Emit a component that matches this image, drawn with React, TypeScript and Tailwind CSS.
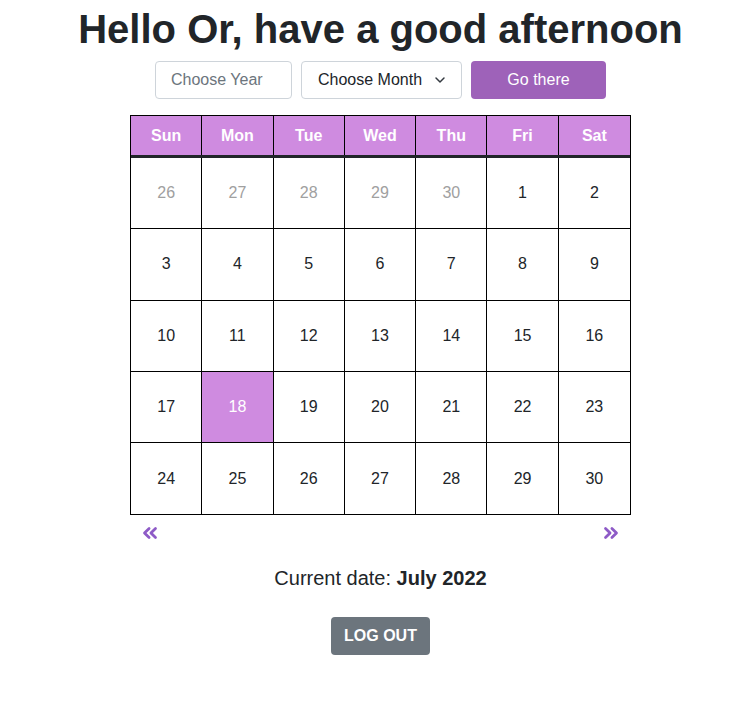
import React from "react";
import { ChevronsLeft, ChevronsRight, ChevronDown } from "lucide-react";

const days = ["Sun", "Mon", "Tue", "Wed", "Thu", "Fri", "Sat"];
const weeks: { d: number; muted?: boolean }[][] = [
  [{ d: 26, muted: true }, { d: 27, muted: true }, { d: 28, muted: true }, { d: 29, muted: true }, { d: 30, muted: true }, { d: 1 }, { d: 2 }],
  [3, 4, 5, 6, 7, 8, 9].map((d) => ({ d })),
  [10, 11, 12, 13, 14, 15, 16].map((d) => ({ d })),
  [17, 18, 19, 20, 21, 22, 23].map((d) => ({ d })),
  [24, 25, 26, 27, 28, 29, 30].map((d) => ({ d })),
];

export default function App() {
  return (
    <div className="min-h-[717px] bg-white text-[#212529] flex flex-col items-center pl-[12px]" style={{ fontFamily: '"Liberation Sans", Arial, sans-serif' }}>
      <h1 className="text-[40px] font-bold leading-[48px] mt-[5px]">Hello Or, have a good afternoon</h1>
      <div className="flex gap-[9px] mt-[8px] h-[38px]">
        <div className="w-[137px] border border-[#ced4da] rounded-[4px] flex items-center px-[15px] text-[16px] text-[#6c757d]">Choose Year</div>
        <div className="w-[161px] border border-[#ced4da] rounded-[4px] flex items-center justify-between pl-[16px] pr-[13px] text-[16px] text-[#212529]">
          <span>Choose Month</span>
          <ChevronDown size={16} strokeWidth={2.2} className="text-[#343a40]" />
        </div>
        <div className="w-[135px] rounded-[4px] bg-[#9e62b9] text-white flex items-center justify-center text-[16px]">Go there</div>
      </div>
      <div className="mt-[16px] w-[501px] border border-black">
        <div className="grid grid-cols-7 h-[42px] bg-[#cf8be0] border-b-[3px] border-[#212529]">
          {days.map((d, i) => (
            <div key={d} className={`flex items-center justify-center text-white font-bold text-[16px] ${i < 6 ? "border-r border-black" : ""}`}>{d}</div>
          ))}
        </div>
        {weeks.map((w, wi) => (
          <div key={wi} className={`grid grid-cols-7 h-[71.3px] ${wi < 4 ? "border-b border-black" : ""}`}>
            {w.map((c, i) => {
              const today = c.d === 18 && !c.muted;
              return (
                <div
                  key={i}
                  className={`flex items-center justify-center text-[16px] ${i < 6 ? "border-r border-black" : ""} ${today ? "bg-[#cf8be0] text-white" : c.muted ? "text-[#a0a0a0]" : "text-[#212529]"}`}
                >
                  {c.d}
                </div>
              );
            })}
          </div>
        ))}
      </div>
      <div className="w-[501px] flex justify-between px-[9px] mt-[7px] text-[#8e5bc7]">
        <ChevronsLeft size={22} strokeWidth={3} />
        <ChevronsRight size={22} strokeWidth={3} />
      </div>
      <div className="mt-[22px] text-[20px] leading-[24px]">
        Current date: <span className="font-bold">July 2022</span>
      </div>
      <div className="mt-[27px] w-[99px] h-[38px] rounded-[4px] bg-[#6c757d] text-white font-bold text-[16px] flex items-center justify-center">LOG OUT</div>
    </div>
  );
}
